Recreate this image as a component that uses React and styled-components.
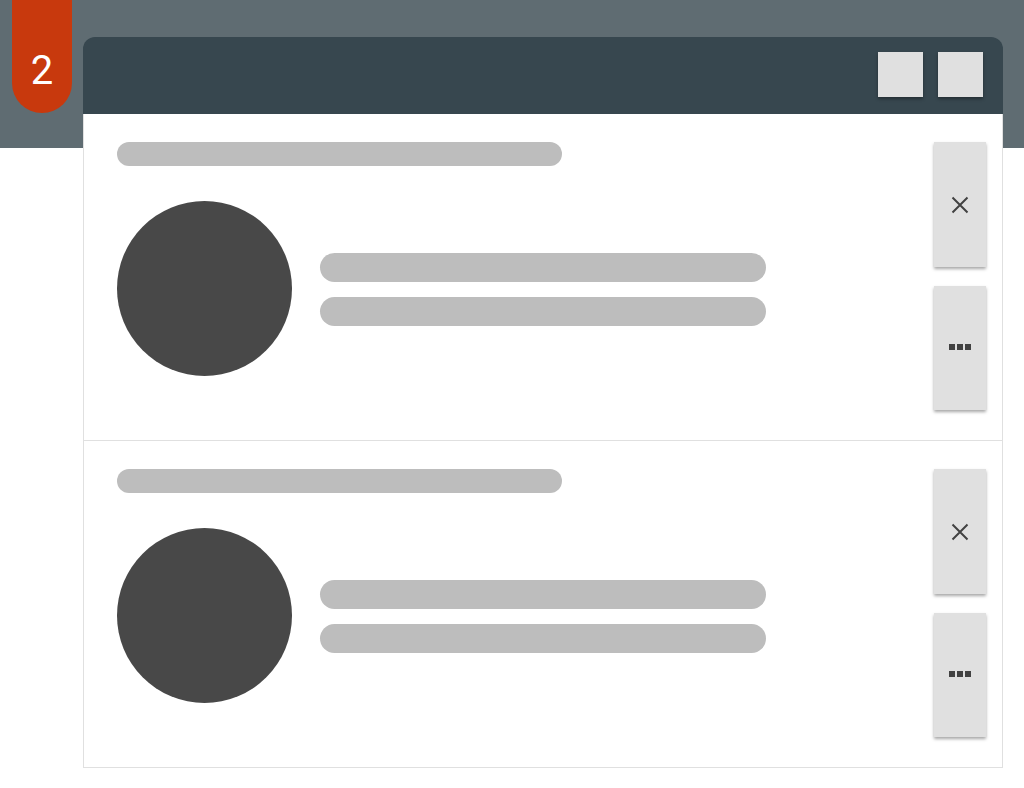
import styled, { createGlobalStyle } from "styled-components";

const GlobalStyle = createGlobalStyle`
  html, body {
    margin: 0;
    padding: 0;
  }
  body {
    width: 1024px;
    height: 788px;
    overflow: hidden;
    font-family: Roboto, "Liberation Sans", sans-serif;
    background: linear-gradient(to bottom, #5f6c72 0, #5f6c72 148px, #ffffff 148px);
  }
`;

const Page = styled.div`
  display: flex;
  align-items: flex-start;
  gap: 11px;
  padding-left: 12px;
`;

const Badge = styled.div`
  width: 60px;
  height: 113px;
  flex: none;
  background: #c8390d;
  border-radius: 0 0 30px 30px;
  color: #ffffff;
  font-size: 40px;
  font-weight: 400;
  display: flex;
  justify-content: center;
  align-items: flex-start;
  padding-top: 51px;
  box-sizing: border-box;
  line-height: 1;
`;

const Window = styled.div`
  width: 920px;
  margin-top: 37px;
  display: flex;
  flex-direction: column;
`;

const Header = styled.div`
  height: 77px;
  background: #37474f;
  border-radius: 12px 12px 0 0;
  display: flex;
  justify-content: flex-end;
  align-items: center;
  gap: 15px;
  padding: 0 20px 2px 0;
  box-sizing: border-box;
`;

const HeaderButton = styled.div`
  width: 45px;
  height: 45px;
  background: #e0e0e0;
  box-shadow: 0 2px 3px rgba(0, 0, 0, 0.35);
`;

const Body = styled.div`
  background: #ffffff;
  border: 1px solid #e0e0e0;
  border-top: none;
`;

const Row = styled.div`
  display: flex;
  padding: 28px 16px 30px 33px;
  border-top: ${(p) => (p.$divider ? "1px solid #e0e0e0" : "none")};
`;

const Main = styled.div`
  flex: 1;
  display: flex;
  flex-direction: column;
`;

const Bar = styled.div`
  width: ${(p) => p.$w}px;
  height: ${(p) => p.$h}px;
  border-radius: ${(p) => p.$h / 2}px;
  background: #bdbdbd;
`;

const Content = styled.div`
  display: flex;
  align-items: center;
  gap: 28px;
  margin-top: 35px;
`;

const Avatar = styled.div`
  width: 175px;
  height: 175px;
  border-radius: 50%;
  background: #484848;
  flex: none;
`;

const Lines = styled.div`
  display: flex;
  flex-direction: column;
  gap: 15px;
  margin-top: 2px;
`;

const Actions = styled.div`
  display: flex;
  flex-direction: column;
  gap: 19px;
`;

const ActionButton = styled.div`
  width: 52px;
  height: ${(p) => p.$h}px;
  background: #e0e0e0;
  box-shadow: 0 2px 3px rgba(0, 0, 0, 0.35);
  display: flex;
  align-items: center;
  justify-content: center;
  color: #424242;
`;

const Dots = styled.div`
  display: flex;
  gap: 2px;
  margin-top: -3px;
`;

const Dot = styled.span`
  width: 6px;
  height: 6px;
  background: #424242;
`;

function CloseIcon() {
  return (
    <svg width="18" height="18" viewBox="0 0 18 18">
      <path d="M1.5 1.5 L16.5 16.5 M16.5 1.5 L1.5 16.5" stroke="#424242" strokeWidth="2" fill="none" />
    </svg>
  );
}

function Card({ divider }) {
  return (
    <Row $divider={divider}>
      <Main>
        <Bar $w={445} $h={24} />
        <Content>
          <Avatar />
          <Lines>
            <Bar $w={446} $h={29} />
            <Bar $w={446} $h={29} />
          </Lines>
        </Content>
      </Main>
      <Actions>
        <ActionButton $h={125}>
          <CloseIcon />
        </ActionButton>
        <ActionButton $h={124}>
          <Dots>
            <Dot />
            <Dot />
            <Dot />
          </Dots>
        </ActionButton>
      </Actions>
    </Row>
  );
}

export default function App() {
  return (
    <>
      <GlobalStyle />
      <Page>
        <Badge>2</Badge>
        <Window>
          <Header>
            <HeaderButton />
            <HeaderButton />
          </Header>
          <Body>
            <Card />
            <Card divider />
          </Body>
        </Window>
      </Page>
    </>
  );
}
